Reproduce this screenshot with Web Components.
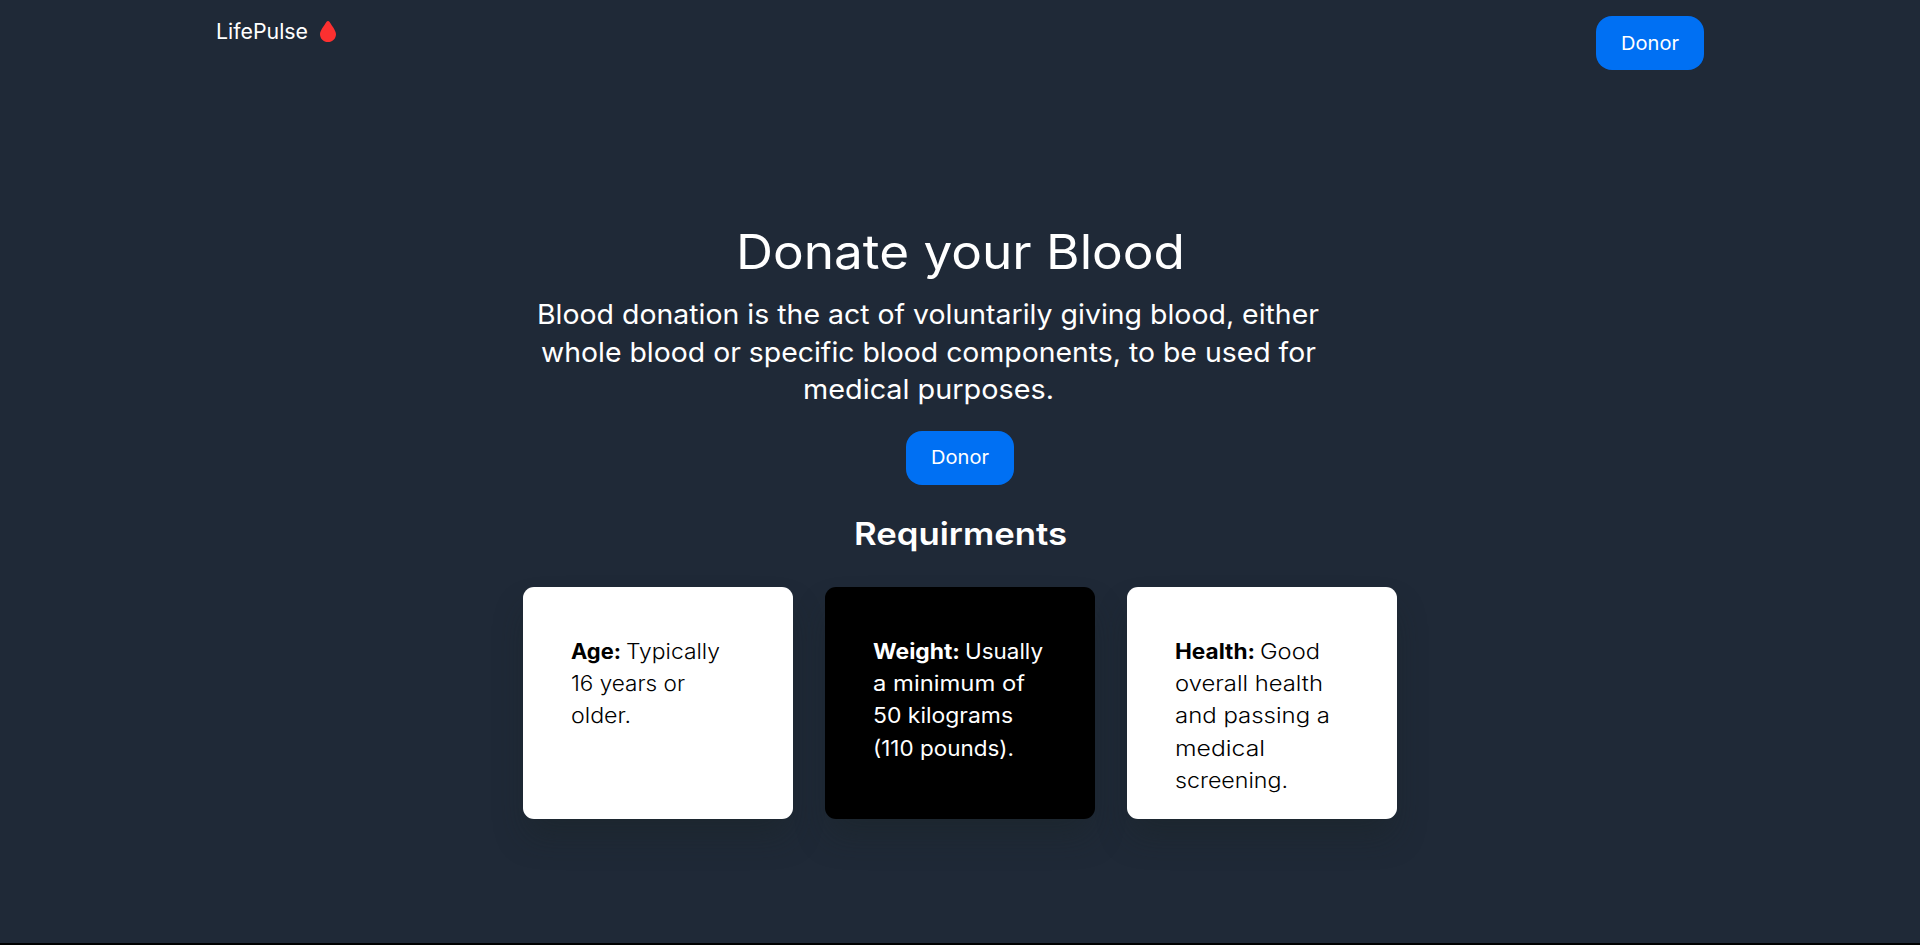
<!DOCTYPE html>
<html lang="en">
<head>
<meta charset="UTF-8">
<title>LifePulse</title>
<style>
    body {
        margin: 0;
        background: #000;
        color: #fff;
        font-family: Inter, "Open Sans", sans-serif;
        overflow: hidden;
    }
    strong {
        font-weight: 700;
    }
</style>
</head>
<body>
<life-page>
    <nav-bar slot="nav">
        <fit-text data-width="92">LifePulse</fit-text>
        <donor-button slot="action">Donor</donor-button>
    </nav-bar>
    <hero-section>
        <fit-text slot="title" data-width="449">Donate your Blood</fit-text>
        <fit-text slot="text" data-width="782">Blood donation is the act of voluntarily giving blood, either</fit-text>
        <fit-text slot="text" data-width="775">whole blood or specific blood components, to be used for</fit-text>
        <fit-text slot="text" data-width="251">medical purposes.</fit-text>
        <donor-button slot="action">Donor</donor-button>
    </hero-section>
    <requirement-list data-title="Requirments">
        <requirement-card>
            <text-line><fit-text data-width="50"><strong>Age:</strong></fit-text> <fit-text data-width="94">Typically</fit-text></text-line>
            <text-line><fit-text data-width="114">16 years or</fit-text></text-line>
            <text-line><fit-text data-width="60">older.</fit-text></text-line>
        </requirement-card>
        <requirement-card data-theme="dark">
            <text-line><fit-text data-width="87"><strong>Weight:</strong></fit-text> <fit-text data-width="78">Usually</fit-text></text-line>
            <text-line><fit-text data-width="152">a minimum of</fit-text></text-line>
            <text-line><fit-text data-width="140">50 kilograms</fit-text></text-line>
            <text-line><fit-text data-width="141">(110 pounds).</fit-text></text-line>
        </requirement-card>
        <requirement-card>
            <text-line><fit-text data-width="80"><strong>Health:</strong></fit-text> <fit-text data-width="60">Good</fit-text></text-line>
            <text-line><fit-text data-width="148">overall health</fit-text></text-line>
            <text-line><fit-text data-width="155">and passing a</fit-text></text-line>
            <text-line><fit-text data-width="90">medical</fit-text></text-line>
            <text-line><fit-text data-width="113">screening.</fit-text></text-line>
        </requirement-card>
    </requirement-list>
</life-page>

<script>
class LifePage extends HTMLElement {
    constructor() {
        super();
        this.attachShadow({ mode: "open" });
        this.shadowRoot.innerHTML = `
            <style>
                :host {
                    display: block;
                    height: 943px;
                    background: #1f2937;
                }
            </style>
            <slot name="nav"></slot>
            <slot></slot>
        `;
    }
}

class NavBar extends HTMLElement {
    constructor() {
        super();
        this.attachShadow({ mode: "open" });
        this.shadowRoot.innerHTML = `
            <style>
                :host {
                    display: flex;
                    justify-content: space-between;
                    align-items: flex-start;
                    padding: 16px 216px 0;
                }
                .brand {
                    display: flex;
                    align-items: center;
                    gap: 12px;
                    font-size: 21.2px;
                    line-height: 31px;
                }
                svg {
                    display: block;
                    width: 16px;
                    height: 21px;
                }
            </style>
            <div class="brand">
                <slot></slot>
                <svg viewBox="0 0 16 21"><path fill="#fc3030" d="M8 0C8.6 0 9.2.3 9.6 1C12.2 5.1 16 9.7 16 13.2C16 17.6 12.4 21 8 21S0 17.6 0 13.2C0 9.7 3.8 5.1 6.4 1C6.8.3 7.4 0 8 0Z"/></svg>
            </div>
            <slot name="action"></slot>
        `;
    }
}

class DonorButton extends HTMLElement {
    constructor() {
        super();
        this.attachShadow({ mode: "open" });
        this.shadowRoot.innerHTML = `
            <style>
                :host {
                    display: block;
                    width: 108px;
                }
                button {
                    display: flex;
                    align-items: center;
                    justify-content: center;
                    width: 100%;
                    height: 54px;
                    padding: 0;
                    border: 0;
                    border-radius: 16px;
                    background: #0070f3;
                    color: #fff;
                    font: 19px Inter, "Open Sans", sans-serif;
                    cursor: pointer;
                }
            </style>
            <button><fit-text data-width="58"><slot></slot></fit-text></button>
        `;
    }
}

class HeroSection extends HTMLElement {
    constructor() {
        super();
        this.attachShadow({ mode: "open" });
        this.shadowRoot.innerHTML = `
            <style>
                :host {
                    display: flex;
                    flex-direction: column;
                    align-items: center;
                    padding-top: 152px;
                }
                h1 {
                    margin: 0;
                    font-size: 47.5px;
                    font-weight: 400;
                    line-height: 60px;
                }
                .text {
                    display: flex;
                    flex-direction: column;
                    align-items: center;
                    margin: 14px 64px 22px 0;
                    font-size: 27.5px;
                    line-height: 37.6px;
                }
            </style>
            <h1><slot name="title"></slot></h1>
            <div class="text"><slot name="text"></slot></div>
            <slot name="action"></slot>
        `;
    }
}

class RequirementList extends HTMLElement {
    constructor() {
        super();
        this.attachShadow({ mode: "open" });
    }

    connectedCallback() {
        const title = this.getAttribute("data-title");

        this.shadowRoot.innerHTML = `
            <style>
                :host {
                    display: flex;
                    flex-direction: column;
                    align-items: center;
                    padding-top: 25px;
                }
                h2 {
                    margin: 0 0 29px;
                    font-size: 31.5px;
                    font-weight: 600;
                    line-height: 48px;
                }
                .cards {
                    display: grid;
                    grid-template-columns: repeat(3, 270px);
                    gap: 32px;
                }
            </style>
            <h2><fit-text data-width="213">${title}</fit-text></h2>
            <div class="cards"><slot></slot></div>
        `;
    }
}

class RequirementCard extends HTMLElement {
    constructor() {
        super();
        this.attachShadow({ mode: "open" });
        this.shadowRoot.innerHTML = `
            <style>
                :host {
                    display: block;
                    box-sizing: border-box;
                    height: 232px;
                    padding: 48px 0 0 48px;
                    border-radius: 11px;
                    background: #fff;
                    color: #000;
                    font-size: 21.2px;
                    font-weight: 300;
                    line-height: 32.3px;
                    box-shadow: 0 20px 32px -4px rgba(26, 36, 36, 0.4);
                }
                :host([data-theme="dark"]) {
                    background: #000;
                    color: #fff;
                    font-weight: 400;
                }
            </style>
            <slot></slot>
        `;
    }
}

class TextLine extends HTMLElement {
    constructor() {
        super();
        this.attachShadow({ mode: "open" });
        this.shadowRoot.innerHTML = `
            <style>
                :host {
                    display: flex;
                    gap: 5px;
                }
            </style>
            <slot></slot>
        `;
    }
}

// One run of text, stretched so that it fills data-width
class FitText extends HTMLElement {
    constructor() {
        super();
        this.attachShadow({ mode: "open" });
        this.shadowRoot.innerHTML = `
            <style>
                :host {
                    display: block;
                    text-align: left;
                    white-space: nowrap;
                }
                span {
                    display: inline-block;
                    transform-origin: 0 50%;
                }
            </style>
            <span><slot></slot></span>
        `;
    }

    fit() {
        const width = Number(this.getAttribute("data-width"));
        const span = this.shadowRoot.querySelector("span");
        const natural = span.getBoundingClientRect().width;
        this.style.width = width + "px";
        span.style.transform = `scaleX(${width / natural})`;
    }
}

customElements.define("life-page", LifePage);
customElements.define("nav-bar", NavBar);
customElements.define("hero-section", HeroSection);
customElements.define("requirement-list", RequirementList);
customElements.define("requirement-card", RequirementCard);
customElements.define("text-line", TextLine);
customElements.define("fit-text", FitText);
customElements.define("donor-button", DonorButton);

function fitAll(root) {
    root.querySelectorAll("*").forEach((el) => {
        if (el instanceof FitText) el.fit();
        if (el.shadowRoot) fitAll(el.shadowRoot);
    });
}
fitAll(document);
</script>
</body>
</html>
